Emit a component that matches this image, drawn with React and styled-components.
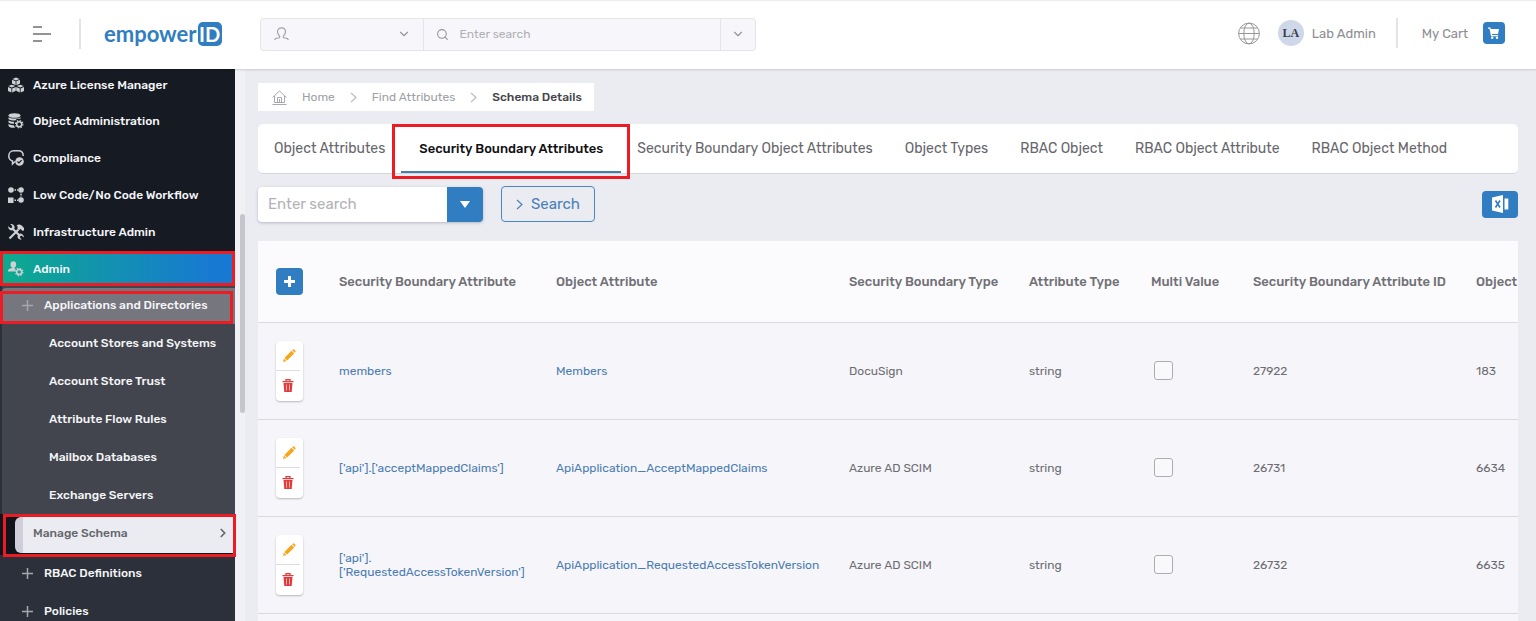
import React from "react";
import styled, { createGlobalStyle, css } from "styled-components";
import { FiChevronDown, FiChevronRight, FiSearch } from "react-icons/fi";

const menu = [
  { label: "Azure License Manager", icon: CubesIcon },
  { label: "Object Administration", icon: DatabaseIcon },
  { label: "Compliance", icon: ComplianceIcon },
  { label: "Low Code/No Code Workflow", icon: WorkflowIcon },
  { label: "Infrastructure Admin", icon: ToolsIcon },
];

const directories = [
  "Account Stores and Systems",
  "Account Store Trust",
  "Attribute Flow Rules",
  "Mailbox Databases",
  "Exchange Servers",
];

const tabs = [
  "Object Attributes",
  "Security Boundary Attributes",
  "Security Boundary Object Attributes",
  "Object Types",
  "RBAC Object",
  "RBAC Object Attribute",
  "RBAC Object Method",
];

const columns = [
  { label: "Security Boundary Attribute", width: 217 },
  { label: "Object Attribute", width: 293 },
  { label: "Security Boundary Type", width: 180 },
  { label: "Attribute Type", width: 122 },
  { label: "Multi Value", width: 102 },
  { label: "Security Boundary Attribute ID", width: 223 },
  { label: "Object", width: 42 },
];

const rows = [
  {
    attribute: "members",
    object: "Members",
    type: "DocuSign",
    id: "27922",
    objectId: "183",
  },
  {
    attribute: "['api'].['acceptMappedClaims']",
    object: "ApiApplication_AcceptMappedClaims",
    type: "Azure AD SCIM",
    id: "26731",
    objectId: "6634",
  },
  {
    attribute: "['api']. ['RequestedAccessTokenVersion']",
    object: "ApiApplication_RequestedAccessTokenVersion",
    type: "Azure AD SCIM",
    id: "26732",
    objectId: "6635",
  },
];

function App() {
  return (
    <Page>
      <GlobalStyle />
      <Header />
      <Body>
        <Sidebar />
        <ScrollTrack>
          <ScrollThumb />
        </ScrollTrack>
        <Main>
          <Breadcrumbs />
          <Tabs />
          <Toolbar />
          <AttributeTable />
        </Main>
      </Body>
    </Page>
  );
}

export default App;

function Header() {
  return (
    <TopBar>
      <MenuButton aria-label="Toggle menu">
        <svg width="18" height="16" viewBox="0 0 18 16">
          <path d="M0 1h9M0 8h18M0 15h9" stroke="#929297" strokeWidth="2" />
        </svg>
      </MenuButton>
      <Divider />
      <Logo href="#">
        empower<LogoBadge>ID</LogoBadge>
      </Logo>
      <GlobalSearch>
        <SearchScope>
          <PersonIcon />
          <ScopeSelect aria-label="Search scope">
            <option></option>
          </ScopeSelect>
          <FiChevronDown size={14} />
        </SearchScope>
        <SearchText>
          <FiSearch size={13} />
          <input aria-label="Global search" placeholder="Enter search" />
        </SearchText>
        <SearchMore aria-label="Search options">
          <FiChevronDown size={14} />
        </SearchMore>
      </GlobalSearch>
      <Account>
        <GlobeIcon />
        <Avatar>LA</Avatar>
        <UserName>Lab Admin</UserName>
        <Divider />
        <Cart>
          <span>My Cart</span>
          <CartButton aria-label="Open cart">
            <CartIcon />
          </CartButton>
        </Cart>
      </Account>
    </TopBar>
  );
}

function Sidebar() {
  return (
    <SideNav>
      {menu.map(({ label, icon: Icon }) => (
        <MenuItem key={label} href="#">
          <Icon />
          {label}
        </MenuItem>
      ))}
      <AdminItem href="#">
        <AdminIcon />
        Admin
      </AdminItem>
      <SubMenu>
        <GroupItem href="#" $open>
          <PlusIcon />
          Applications and Directories
        </GroupItem>
        {directories.map((label) => (
          <SubItem key={label} href="#">
            {label}
          </SubItem>
        ))}
      </SubMenu>
      <CurrentRow>
        <CurrentItem href="#">
          Manage Schema
          <FiChevronRight size={14} strokeWidth={3} />
        </CurrentItem>
      </CurrentRow>
      <GroupItem href="#">
        <PlusIcon />
        RBAC Definitions
      </GroupItem>
      <GroupItem href="#">
        <PlusIcon />
        Policies
      </GroupItem>
    </SideNav>
  );
}

function Breadcrumbs() {
  return (
    <Crumbs aria-label="Breadcrumb">
      <HomeIcon />
      <a href="#">Home</a>
      <CrumbArrow />
      <a href="#">Find Attributes</a>
      <CrumbArrow />
      <strong>Schema Details</strong>
    </Crumbs>
  );
}

function Tabs() {
  return (
    <TabBar role="tablist">
      {tabs.map((label, i) => (
        <Tab key={label} role="tab" aria-selected={i === 1} $active={i === 1}>
          {label}
        </Tab>
      ))}
    </TabBar>
  );
}

function Toolbar() {
  return (
    <Tools>
      <Filter>
        <input aria-label="Filter attributes" placeholder="Enter search" />
        <FilterButton aria-label="Filter options">
          <svg width="10" height="7" viewBox="0 0 10 7">
            <path d="M0 0h10L5 7z" fill="#fff" />
          </svg>
        </FilterButton>
      </Filter>
      <SearchButton>
        <svg width="7" height="11" viewBox="0 0 7 11" fill="none">
          <path d="M1 1l5 4.5L1 10" stroke="#4a80b5" strokeWidth="1.2" />
        </svg>
        Search
      </SearchButton>
      <ExportButton aria-label="Export to Excel">
        <ExcelIcon />
      </ExportButton>
    </Tools>
  );
}

function AttributeTable() {
  return (
    <TableCard>
      <Table>
        <colgroup>
          <Col $width={81} />
          {columns.map((column) => (
            <Col key={column.label} $width={column.width} />
          ))}
        </colgroup>
        <thead>
          <tr>
            <th>
              <AddButton aria-label="Add attribute">
                <svg width="11" height="11" viewBox="0 0 11 11">
                  <path d="M5.5 0v11M0 5.5h11" stroke="#fff" strokeWidth="3" />
                </svg>
              </AddButton>
            </th>
            {columns.map((column) => (
              <th key={column.label}>{column.label}</th>
            ))}
          </tr>
        </thead>
        <tbody>
          {rows.map((row) => (
            <tr key={row.id}>
              <td>
                <RowActions>
                  <button aria-label={`Edit ${row.attribute}`}>
                    <PencilIcon />
                  </button>
                  <button aria-label={`Delete ${row.attribute}`}>
                    <TrashIcon />
                  </button>
                </RowActions>
              </td>
              <td>
                <a href="#">{row.attribute}</a>
              </td>
              <td>
                <a href="#">{row.object}</a>
              </td>
              <td>{row.type}</td>
              <td>string</td>
              <td>
                <Checkbox
                  type="checkbox"
                  aria-label={`Multi value ${row.attribute}`}
                />
              </td>
              <td>{row.id}</td>
              <td>{row.objectId}</td>
            </tr>
          ))}
        </tbody>
      </Table>
    </TableCard>
  );
}

function PersonIcon() {
  return (
    <svg width="15" height="14" viewBox="0 0 15 14" fill="none">
      <path
        d="M.7 13c.3-1.500 1.500-2 3-2 1.500 0 2.300-.3 2-1.500C5.400 8.500 3.500 7.200 3.500 4.700 3.500 2.300 5.100.8 7.500.8s4 1.500 4 3.900c0 2.500-1.900 3.800-2.200 4.800-.3 1.200.5 1.500 2 1.500s2.700.5 3 2"
        stroke="#a3a2a9"
        strokeWidth="1.2"
      />
    </svg>
  );
}

function GlobeIcon() {
  return (
    <svg width="22" height="23" viewBox="0 0 22 23" fill="none" stroke="#97969b">
      <circle cx="11" cy="11.500" r="10.400" />
      <ellipse cx="11" cy="11.500" rx="5.200" ry="10.400" />
      <path d="M.6 11.500h20.800M2.400 6h17.200M2.400 17h17.200" />
    </svg>
  );
}

function CartIcon() {
  return (
    <svg width="12" height="12" viewBox="0 0 12 12" fill="#fff">
      <path d="M0 .5h2.400L2.900 2H11l-.9 5H3.900l.2 1h6v1.200H3L1.500 1.700H0z" />
      <circle cx="4.200" cy="10.700" r="1.200" />
      <circle cx="9" cy="10.700" r="1.200" />
    </svg>
  );
}

function GearIcon({ x, y }) {
  return (
    <g transform={`translate(${x} ${y})`} fill="none" stroke="currentColor">
      <circle r="2.500" strokeWidth="1.500" />
      <circle r="3.700" strokeWidth="1.200" strokeDasharray="1.450 1.450" />
    </g>
  );
}

function Cube({ x, y }) {
  return (
    <g transform={`translate(${x} ${y})`}>
      <path d="M4 0l3.500 1.400L4 2.900.5 1.400z" />
      <path d="M0 2.200l3.600 1.500v4L0 6.100zM8 2.200L4.400 3.700v4L8 6.100z" />
    </g>
  );
}

function CubesIcon() {
  return (
    <svg width="16" height="16" viewBox="0 0 16 16" fill="currentColor">
      <Cube x={4} y={0.5} />
      <Cube x={-0.2} y={7.7} />
      <Cube x={8.2} y={7.7} />
    </svg>
  );
}

function DatabaseIcon() {
  return (
    <svg width="16" height="16" viewBox="0 0 16 16" fill="currentColor">
      <ellipse cx="6.500" cy="2.500" rx="6" ry="2.300" />
      <path d="M.5 4.200c2.500 1.800 9.500 1.800 12 0v1.600H9L7.300 7.500C4 7.500 1.500 7 .5 6z" />
      <path d="M.5 7.500c1.500 1 3.500 1.200 5.500 1.200v2c-2.500 0-4.500-.4-5.500-1.300z" />
      <path d="M.5 11c1.500 1 3.500 1.200 5.300 1.200L7 14.800C4 15 1.300 14.500.5 13z" />
      <GearIcon x={11.2} y={11.2} />
    </svg>
  );
}

function ComplianceIcon() {
  return (
    <svg width="16" height="16" viewBox="0 0 16 16" fill="none">
      <path
        d="M7 11.500l-2.500 2.500V11C2.300 10.300.8 8.500.8 6c0-3 2-5.200 5-5.200h4.500c3 0 4.900 2 4.900 5.200"
        stroke="currentColor"
        strokeWidth="1.500"
      />
      <circle cx="11.500" cy="11.500" r="4.300" fill="currentColor" />
      <path d="M9.400 11.500l1.500 1.500 2.700-2.900" stroke="#161a23" strokeWidth="1.200" />
    </svg>
  );
}

function WorkflowIcon() {
  return (
    <svg width="16" height="16" viewBox="0 0 16 16" fill="currentColor">
      <circle cx="3" cy="3" r="2.800" />
      <circle cx="13" cy="3" r="2.800" />
      <circle cx="13" cy="13" r="2.800" />
      <path d="M0 10.500h5.500V16H0z" />
      <path d="M6.500 2.300H8v1.400H6.500zM9 2.300h1.200v1.400H9zM12.300 6.500h1.400V8h-1.400zM12.300 8.500h1.400v1h-1.400zM6.500 12.500H8v1.400H6.500zM9 12.500h1.200v1.400H9z" />
    </svg>
  );
}

function ToolsIcon() {
  return (
    <svg width="16" height="16" viewBox="0 0 16 16" fill="none">
      <path
        d="M11.500 11.500L5 5M1.500 14.500l9-9"
        stroke="currentColor"
        strokeWidth="2.200"
      />
      <path d="M8.500 1.500c2-1.800 4-1.200 5.500.3L16 4v2.500l-1.800.3-1.600-1.800-1.500 1-2-2L10 3z" fill="currentColor" />
      <path d="M.3 2.200l2 1.800L4 3.700 4.200 2 2.300.2C4.500-.4 7 1.200 6.600 4L4.200 6.600C1.700 6.500-.2 4.600.3 2.200z" fill="currentColor" />
      <path d="M15.700 13.400l-1.900-1.600-1.600.3-.2 1.600 1.700 1.900c-2.200.5-4.500-1-4.200-3.700l2.400-2.500c2.400 0 4.300 1.700 3.800 4z" fill="currentColor" />
    </svg>
  );
}

function AdminIcon() {
  return (
    <svg width="16" height="16" viewBox="0 0 16 16" fill="currentColor">
      <ellipse cx="5.300" cy="3.500" rx="2.800" ry="3.300" />
      <path d="M4.200 5.500h2.200v1.800l1.300.8-1.200 2.400H0c0-2 .8-2.600 4.200-3.400z" />
      <GearIcon x={11.2} y={11} />
    </svg>
  );
}

function PlusIcon() {
  return (
    <svg width="11" height="11" viewBox="0 0 11 11">
      <path d="M5.500 0v11M0 5.500h11" stroke="#a5a7b0" strokeWidth="1.500" />
    </svg>
  );
}

function HomeIcon() {
  return (
    <svg width="15" height="15" viewBox="0 0 15 15" fill="none" stroke="#a9a7ae">
      <path d="M.5 7.500l7-6.500 7 6.500M2.500 6v6.500h10V6M5.500 12V7.500h4V12M7.500 9v3.500M.5 14.500h14" />
    </svg>
  );
}

function CrumbArrow() {
  return (
    <svg width="7" height="11" viewBox="0 0 7 11" fill="none">
      <path d="M1 1l5 4.500L1 10" stroke="#c3c2c8" strokeWidth="1.500" />
    </svg>
  );
}

function ExcelIcon() {
  return (
    <svg width="17" height="18" viewBox="0 0 17 18">
      <path d="M0 2.500L11 0v18L0 15.500z" fill="#fff" />
      <path d="M12.500 3.500h3.800v11h-3.800z" fill="#fff" />
      <path d="M3.500 5.500l4.500 7M8 5.500l-4.500 7" stroke="#307dc1" strokeWidth="1.600" />
    </svg>
  );
}

function PencilIcon() {
  return (
    <svg width="13" height="13" viewBox="0 0 13 13" fill="#f9a51b">
      <path d="M0 13l.9-3.400 2.500 2.500zM1.400 8.900L8.500 1.800l2.700 2.700-7.100 7.100zM9.200 1.200l.8-.7c.8-.7 3.200 1.700 2.500 2.500l-.7.800z" />
    </svg>
  );
}

function TrashIcon() {
  return (
    <svg width="12" height="13" viewBox="0 0 12 13" fill="none">
      <path d="M1.500 4h9l-.8 9H2.300z" fill="#e33b3b" />
      <path d="M4.500 5.500v6M7.500 5.500v6" stroke="#f7b4b2" />
      <path d="M.5 2.700h11M4 2.500V.7h4v1.800" stroke="#e33b3b" strokeWidth="1.300" />
    </svg>
  );
}

const GlobalStyle = createGlobalStyle`
  * {
    box-sizing: border-box;
  }

  body {
    margin: 0;
    color: #6d6d72;
    background: #ebecf2;
    font-family: Rubik, Roboto, sans-serif;
    font-size: 13px;
  }

  a {
    color: inherit;
    text-decoration: none;
  }

  button, input, select {
    margin: 0;
    padding: 0;
    border: 0;
    color: inherit;
    background: none;
    font: inherit;
    outline: none;
  }

  button {
    cursor: pointer;
  }

  svg {
    display: block;
    flex-shrink: 0;
  }
`;

const marked = css`
  position: relative;

  &::after {
    content: "";
    position: absolute;
    inset: 0;
    z-index: 2;
    border: 3px solid #ec1c24;
    pointer-events: none;
  }
`;

const Page = styled.div`
  display: flex;
  flex-direction: column;
  height: 100vh;
  overflow: hidden;
`;

const TopBar = styled.header`
  display: flex;
  align-items: center;
  flex-shrink: 0;
  height: 69px;
  padding: 0 31px 2px 33px;
  z-index: 1;
  background: #fff;
  border-top: 1px solid #eeeef0;
  box-shadow: 0 1px 2px rgba(0, 0, 0, 0.15);
`;

const MenuButton = styled.button`
  margin-right: 28px;
`;

const Divider = styled.span`
  width: 2px;
  height: 30px;
  background: #e4e3e8;
`;

const Logo = styled.a`
  display: flex;
  align-items: center;
  gap: 1px;
  margin-left: 23px;
  color: #307dc1;
  font-family: Lato, sans-serif;
  font-size: 22px;
  font-weight: 700;
  line-height: 24px;
`;

const LogoBadge = styled.span`
  width: 24px;
  height: 24px;
  border-radius: 5px;
  color: #fff;
  background: #307dc1;
  font-size: 20px;
  text-align: center;
`;

const GlobalSearch = styled.div`
  display: flex;
  flex: 0 1 496px;
  height: 33px;
  margin-left: 38px;
  border: 1px solid #e6e4eb;
  border-radius: 4px;
  color: #97969d;
  background: #f7f6fa;
  font-size: 12px;
`;

const SearchScope = styled.label`
  display: flex;
  align-items: center;
  width: 163px;
  padding: 0 12px 0 13px;
  border-right: 1px solid #e6e4eb;
`;

const ScopeSelect = styled.select`
  flex: 1;
  min-width: 0;
  appearance: none;
`;

const SearchText = styled.label`
  display: flex;
  flex: 1;
  align-items: center;
  gap: 11px;
  padding-left: 12px;

  input {
    flex: 1;
    min-width: 0;
  }

  input::placeholder {
    color: #b1b0b6;
  }
`;

const SearchMore = styled.button`
  display: flex;
  align-items: center;
  justify-content: center;
  width: 35px;
  border-left: 1px solid #e6e4eb;
`;

const Account = styled.div`
  display: flex;
  align-items: center;
  margin-left: auto;
  padding-bottom: 2px;
  color: #8e8d92;
`;

const UserName = styled.span`
  margin-right: 20px;
`;

const Avatar = styled.span`
  width: 26px;
  margin: 0 8px 0 18px;
  border-radius: 50%;
  color: #39404f;
  background: #cfd8e8;
  font: 700 12px/26px "Liberation Serif", serif;
  text-align: center;
`;

const Cart = styled.div`
  display: flex;
  align-items: center;
  gap: 15px;
  margin-left: 24px;
`;

const CartButton = styled.button`
  display: flex;
  align-items: center;
  justify-content: center;
  width: 22px;
  height: 22px;
  border-radius: 4px;
  background: #307dc1;
`;

const Body = styled.div`
  display: flex;
  flex: 1;
  min-height: 0;
`;

const SideNav = styled.nav`
  display: flex;
  flex-direction: column;
  flex-shrink: 0;
  width: 235px;
  color: #f4f5f7;
  background: #2b303a;
  font-size: 12px;
  font-weight: 500;

  a {
    flex-shrink: 0;
  }
`;

const MenuItem = styled.a`
  display: flex;
  align-items: center;
  gap: 9px;
  height: 37px;
  padding: 0 0 1px 8px;
  background: #161a23;

  &:first-child {
    height: 34px;
    padding-bottom: 2px;
  }

  svg {
    color: #ced0d5;
  }
`;

const AdminItem = styled(MenuItem)`
  ${marked}
  height: 35px;
  padding-bottom: 0;
  background: linear-gradient(90deg, #0cab8c, #1879d2 90%);
`;

const SubMenu = styled.div`
  display: flex;
  flex-direction: column;
  flex-shrink: 0;
  padding: 2px 0 0 2px;
  background: linear-gradient(90deg, #2b303a 2px, #43454e 2px);
`;

const GroupItem = styled.a`
  display: flex;
  align-items: center;
  gap: 11px;
  height: 38px;
  padding: 0 0 2px 22px;

  ${({ $open }) =>
    $open &&
    css`
      ${marked}
      height: 36px;
      padding-left: 20px;
      border-radius: 4px 0 0 0;
      background: #76767f;

      &::after {
        inset: 3px 2px 0 -2px;
      }
    `}
`;

const SubItem = styled.a`
  padding-left: 47px;
  line-height: 38px;
`;

const CurrentRow = styled.div`
  ${marked}
  display: flex;
  flex-shrink: 0;
  height: 41px;
  padding: 3px 0 2px 15px;
  background: #10141c;

  &::after {
    inset: 0 -1px -2px 3px;
  }
`;

const CurrentItem = styled.a`
  display: flex;
  flex: 1;
  align-items: center;
  justify-content: space-between;
  padding: 0 5px 4px 10px;
  border-left: 8px solid #d0cfd9;
  border-radius: 6px 0 0 6px;
  color: #66666c;
  background: #ebecf2;
`;

const ScrollTrack = styled.div`
  flex-shrink: 0;
  width: 10px;
  padding-left: 5px;
  background: #f0f0f5;
`;

const ScrollThumb = styled.div`
  height: 199px;
  margin-top: 145px;
  border-radius: 3px;
  background: #c5c6cb;
`;

const Main = styled.main`
  display: flex;
  flex: 1;
  flex-direction: column;
  min-width: 0;
  padding: 14px 18px 0 13px;
`;

const Crumbs = styled.nav`
  display: flex;
  align-items: center;
  align-self: flex-start;
  gap: 15px;
  height: 28px;
  padding: 0 12px 0 14px;
  color: #a09fa6;
  background: #fff;
  font-size: 12px;

  strong {
    color: #45454b;
    font-weight: 500;
  }
`;

const TabBar = styled.div`
  display: flex;
  flex-shrink: 0;
  height: 50px;
  margin-top: 13px;
  border-bottom: 1px solid #d5d6dc;
  border-radius: 5px;
  background: #fff;
`;

const Tab = styled.button`
  flex-shrink: 0;
  padding: 0 16px;
  font-size: 14px;
  color: #66666b;

  ${({ $active }) =>
    $active &&
    css`
      ${marked}
      padding: 0 18px;
      color: #111114;
      font-size: 13px;
      font-weight: 500;
      box-shadow: inset 0 -2px #477fa8;

      &::after {
        inset: 0 -9px -6px;
      }
    `}
`;

const Tools = styled.div`
  display: flex;
  align-items: center;
  flex-shrink: 0;
  margin-top: 12px;
`;

const Filter = styled.div`
  display: flex;
  width: 225px;
  height: 35px;
  border-radius: 4px;
  background: #fff;
  box-shadow: 0 1px 3px rgba(60, 60, 90, 0.3);
  font-size: 15px;
  overflow: hidden;

  input {
    flex: 1;
    min-width: 0;
    padding-left: 10px;
  }

  input::placeholder {
    color: #b3b2b7;
  }
`;

const FilterButton = styled.button`
  display: flex;
  align-items: center;
  justify-content: center;
  width: 36px;
  background: #307dc1;
`;

const SearchButton = styled.button`
  display: flex;
  align-items: center;
  justify-content: center;
  gap: 8px;
  width: 94px;
  height: 36px;
  margin-left: 18px;
  border: 1px solid #4a87c0;
  border-radius: 4px;
  color: #4a80b5;
  font-size: 15px;
`;

const ExportButton = styled.button`
  display: flex;
  align-items: center;
  justify-content: center;
  width: 36px;
  height: 27px;
  margin-left: auto;
  border-radius: 4px;
  background: #307dc1;
`;

const TableCard = styled.div`
  flex: 1;
  min-height: 0;
  margin-top: 19px;
  background: #f5f5fa;
  overflow: hidden;
`;

const Table = styled.table`
  width: 100%;
  table-layout: fixed;
  border-collapse: collapse;

  tr {
    border-bottom: 1px solid #d9d9df;
  }

  th,
  td {
    padding: 0;
    text-align: left;
  }

  th {
    height: 81px;
    color: #707075;
    background: #fbfbfe;
    font-weight: 500;
    white-space: nowrap;
  }

  td {
    height: 97px;
    padding-right: 24px;
    font-size: 12px;
    line-height: 14px;
  }

  td:last-child {
    padding-right: 0;
  }

  th:first-child,
  td:first-child {
    padding-left: 18px;
  }

  a {
    color: #4b7cb0;
  }
`;

const Col = styled.col`
  width: ${({ $width }) => $width}px;
`;

const AddButton = styled.button`
  display: flex;
  align-items: center;
  justify-content: center;
  width: 27px;
  height: 27px;
  border-radius: 4px;
  background: #307dc1;
`;

const RowActions = styled.div`
  display: flex;
  flex-direction: column;
  width: 27px;
  height: 60px;
  border-radius: 4px;
  background: #fff;
  box-shadow: 0 1px 2px rgba(0, 0, 0, 0.25);

  button {
    display: flex;
    flex: 1;
    align-items: center;
    justify-content: center;
  }

  button + button {
    margin-right: 3px;
    border-top: 1px solid #dddde2;
  }
`;

const Checkbox = styled.input`
  display: block;
  width: 19px;
  height: 19px;
  margin-left: 3px;
  appearance: none;
  border: 1px solid #acacb1;
  border-radius: 3px;
  background: #f9f9fc;
`;
